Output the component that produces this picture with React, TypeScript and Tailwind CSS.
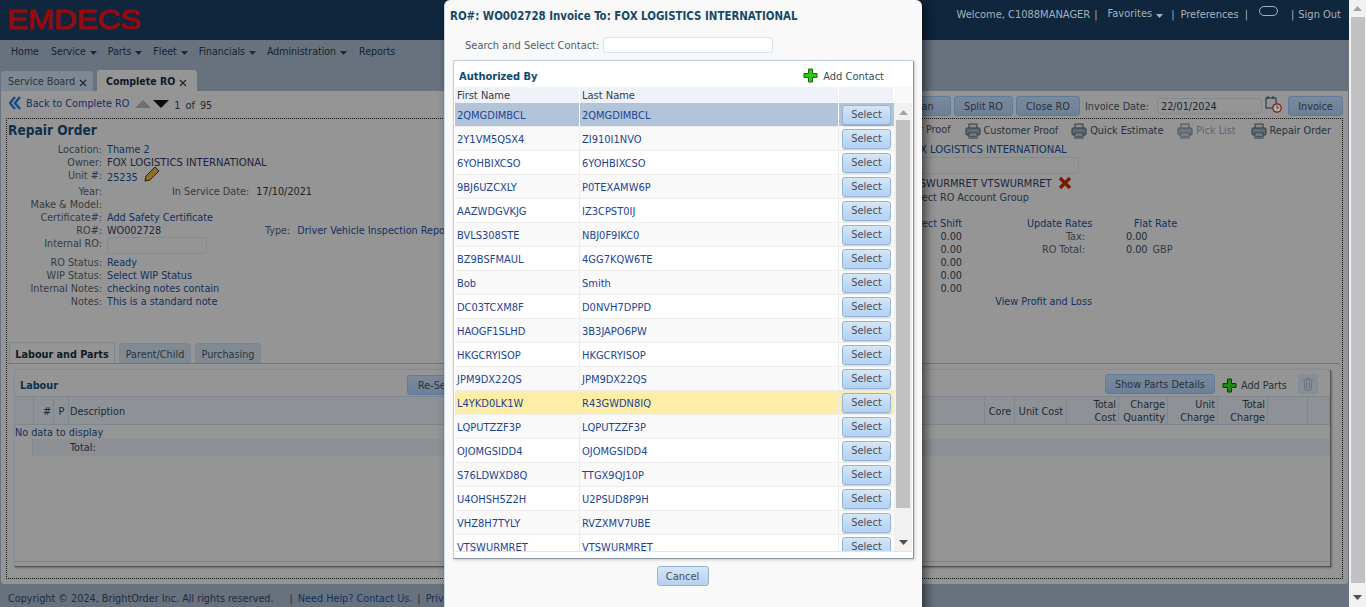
import React from "react";

const font = { fontFamily: '"DejaVu Sans", sans-serif' };

const contacts: [string, string][] = [
  ["2QMGDIMBCL", "2QMGDIMBCL"], ["2Y1VM5QSX4", "ZI910I1NVO"], ["6YOHBIXCSO", "6YOHBIXCSO"],
  ["9BJ6UZCXLY", "P0TEXAMW6P"], ["AAZWDGVKJG", "IZ3CPST0IJ"], ["BVLS308STE", "NBJ0F9IKC0"],
  ["BZ9BSFMAUL", "4GG7KQW6TE"], ["Bob", "Smith"], ["DC03TCXM8F", "D0NVH7DPPD"],
  ["HAOGF1SLHD", "3B3JAPO6PW"], ["HKGCRYISOP", "HKGCRYISOP"], ["JPM9DX22QS", "JPM9DX22QS"],
  ["L4YKD0LK1W", "R43GWDN8IQ"], ["LQPUTZZF3P", "LQPUTZZF3P"], ["OJOMGSIDD4", "OJOMGSIDD4"],
  ["S76LDWXD8Q", "TTGX9QJ10P"], ["U4OHSH5Z2H", "U2PSUD8P9H"], ["VHZ8H7TYLY", "RVZXMV7UBE"],
  ["VTSWURMRET", "VTSWURMRET"],
];

const Plus = ({ dark = false }: { dark?: boolean }) => (
  <svg width="15" height="15" viewBox="0 0 15 15" className="shrink-0">
    <path d="M5.5 1h4v4.5H14v4H9.5V14h-4V9.5H1v-4h4.5z" fill={dark ? "#1f8a12" : "#2fc812"} stroke={dark ? "#0c3d08" : "#116b08"} strokeWidth="1" />
  </svg>
);

const Printer = ({ dim = false }: { dim?: boolean }) => (
  <svg width="16" height="16" viewBox="0 0 16 16" className="shrink-0" opacity={dim ? 0.7 : 1}>
    <rect x="4" y="1" width="8" height="5" fill="#8c8c8c" stroke="#2f3a44" />
    <rect x="1" y="5" width="14" height="7" rx="1" fill="#5f6a75" stroke="#2f3a44" />
    <rect x="4" y="10" width="8" height="5" fill="#9a9a9a" stroke="#2f3a44" />
    <path d="M5 12h6M5 13.5h6" stroke="#4a5560" />
  </svg>
);

const Caret = ({ color = "#1e2a36" }: { color?: string }) => (
  <svg width="7" height="4" viewBox="0 0 7 4" className="ml-[4px] mt-[6px] shrink-0"><path d="M0 0h7L3.5 4z" fill={color} /></svg>
);

const Close = () => (
  <svg width="8" height="8" viewBox="0 0 8 8" className="mt-[4px] ml-[4px] shrink-0"><path d="M1 1l6 6M7 1L1 7" stroke="#222" strokeWidth="1.1" /></svg>
);

function BgButton({ children, className = "" }: { children: React.ReactNode; className?: string }) {
  return (
    <button className={"h-5 rounded-[3px] border border-[#5d7c9d] bg-gradient-to-b from-[#7b8a9a] to-[#6c8098] text-[#27323d] text-center leading-[17px] whitespace-nowrap " + className}>
      {children}
    </button>
  );
}

function Field({ label, children, h = "h-[13px]" }: { label: string; children?: React.ReactNode; h?: string }) {
  return (
    <div className={"flex " + h}>
      <div className="w-[93px] text-right text-[#333c46] shrink-0 whitespace-nowrap">{label}</div>
      <div className="ml-[5px] text-[#10315e] whitespace-nowrap flex items-start">{children}</div>
    </div>
  );
}

function ColHead({ w, children, right = false, two = false }: { w: string; children?: React.ReactNode; right?: boolean; two?: boolean }) {
  return (
    <div className={"flex items-center border-r border-[#7f868e] h-full pl-[3px] pr-[2px] text-[#1d2a36] leading-[13px] shrink-0 whitespace-nowrap " + w + (right ? " justify-end text-right" : " justify-center") + (two ? "" : " pt-[1px]")}>
      <span>{children}</span>
    </div>
  );
}

function Background() {
  return (
    <div className="flex h-full w-[1349px] flex-col shrink-0 bg-[#67727e] text-[10.75px]">
      <header className="flex h-10 shrink-0 bg-[#0f263d] justify-between pl-[8px] pr-[8px]">
        <svg width="136" height="24" viewBox="0 0 136 24" className="mt-[7px]">
          <text x="-1" y="22" textLength="134" lengthAdjust="spacingAndGlyphs" fontFamily="Liberation Sans, sans-serif" fontWeight="400" fontSize="28" stroke="#930b10" strokeWidth="1.1" fill="#930b10">EMDECS</text>
        </svg>
        <div className="flex items-start pt-[8px] text-[11px] text-[#a4b2bf] whitespace-nowrap">
          <span>Welcome, C1088MANAGER</span>
          <span className="ml-[4px]">|</span>
          <span className="ml-[10px] -mt-[1px]">Favorites</span><Caret color="#a4b2bf" />
          <span className="ml-[8px]">|</span>
          <span className="ml-[6px]">Preferences</span>
          <span className="ml-[6px]">|</span>
          <span className="ml-[11px] block h-[10px] w-[19px] rounded-[5px] border-[1.5px] border-[#a4b2bf] mt-[-2px]" />
          <span className="ml-[13px]">|</span>
          <span className="ml-[4px]">Sign Out</span>
        </div>
      </header>

      <div className="flex h-[30px] shrink-0 items-start pl-[11px] pt-[5px] text-[10.5px] text-[#15222f] whitespace-nowrap">
        <span>Home</span>
        <span className="ml-[12px]">Service</span><Caret />
        <span className="ml-[11px]">Parts</span><Caret />
        <span className="ml-[11px]">Fleet</span><Caret />
        <span className="ml-[11px]">Financials</span><Caret />
        <span className="ml-[11px]">Administration</span><Caret />
        <span className="ml-[12px]">Reports</span>
      </div>

      <div className="flex h-[21px] shrink-0 items-end pl-[1px]">
        <div className="flex h-[20px] w-[92px] items-start rounded-t-[3px] bg-[#7e8892] pl-[7px] pt-[4px] text-[#2b3540] whitespace-nowrap">
          Service Board<Close />
        </div>
        <div className="ml-[4px] flex h-[21px] w-[100px] items-start rounded-t-[3px] bg-[#959595] pl-[9px] pt-[5px] text-[10.5px] font-bold text-[#0f1b26] whitespace-nowrap">
          Complete RO<Close />
        </div>
      </div>

      <main className="mx-[1px] flex h-[493px] shrink-0 flex-col rounded-b-[3px] bg-[#959595] pl-[5px] pr-[5px]">
        <div className="flex h-[27px] shrink-0 items-start justify-between">
          <div className="flex items-start pt-[6px] pl-[3px] whitespace-nowrap">
            <svg width="12" height="14" viewBox="0 0 12 14" className="shrink-0 -mt-[1px]"><path d="M6 1L1 7l5 6M11 1L6 7l5 6" fill="none" stroke="#1a4a8a" strokeWidth="2.4" /></svg>
            <span className="ml-[5px] text-[#123063]">Back to Complete RO</span>
            <svg width="16" height="9" viewBox="0 0 16 9" className="ml-[6px] mt-[3px]"><path d="M8 0l8 8H0z" fill="#6f6f6f" /></svg>
            <svg width="16" height="9" viewBox="0 0 16 9" className="ml-[2px] mt-[3px]"><path d="M0 0h16L8 8z" fill="#0c0c0c" /></svg>
            <span className="ml-[5px] mt-[2px] text-[#1b2b3a] [word-spacing:2px]">1 of 95</span>
          </div>
          <div className="flex items-start pt-[5px] whitespace-nowrap">
            <BgButton className="w-[120px]">Assign Technician</BgButton>
            <BgButton className="ml-[3px] w-[59px]">Split RO</BgButton>
            <BgButton className="ml-[3px] w-[64px]">Close RO</BgButton>
            <span className="ml-[5px] mt-[4px] w-[66px] text-[#2a3440]">Invoice Date:</span>
            <div className="ml-[6px] mt-[2px] h-[16px] w-[105px] rounded-[3px] border border-[#818a93] bg-[#959595] pl-[3px] leading-[15px] text-[#1c2733]">22/01/2024</div>
            <svg width="17" height="17" viewBox="0 0 17 17" className="ml-[3px]">
              <rect x="1" y="2" width="10" height="10" fill="none" stroke="#1c2a3a" />
              <path d="M3 0v3M8 0v3" stroke="#1c2a3a" />
              <circle cx="12" cy="12" r="4.2" fill="#b0b0b0" stroke="#7c1c10" strokeWidth="1.2" />
              <path d="M12 9.5V12h2" stroke="#7c1c10" fill="none" />
            </svg>
            <BgButton className="ml-[6px] w-[55px]">Invoice</BgButton>
          </div>
        </div>

        <section className="flex h-[461px] shrink-0 flex-col border border-dotted border-[#111] pl-[1px] pr-[1px]">
          <div className="flex h-[223px] shrink-0">
            <div className="w-[800px] shrink-0">
              <h1 className="h-[24px] pt-[2px] text-[13.6px] font-bold leading-[18px] text-[#0e2f4b]">Repair Order</h1>
              <div className="flex flex-col pl-[1px]">
                <Field label="Location:">Thame 2</Field>
                <Field label="Owner:"><span className="text-[11.2px] text-[#1d2440]">FOX LOGISTICS INTERNATIONAL</span></Field>
                <Field label="Unit #:" h="h-[16px]">
                  <span className="mt-[2px]">25235</span>
                  <svg width="16" height="16" viewBox="0 0 16 16" className="ml-[6px] -mt-[3px]">
                    <path d="M1 15l1-5L11 1l4 4-9 9z" fill="#8f6f28" stroke="#2c2006" strokeWidth="1" />
                  </svg>
                </Field>
                <Field label="Year:">
                  <span className="ml-[65px] text-[#333c46]">In Service Date:</span>
                  <span className="ml-[7px] text-[#222]">17/10/2021</span>
                </Field>
                <Field label="Make &amp; Model:" />
                <Field label="Certificate#:">Add Safety Certificate</Field>
                <Field label="RO#:">
                  <span className="text-[#1d2440] w-[158px]">WO002728</span>
                  <span className="text-[#333c46]">Type:</span>
                  <span className="ml-[7px]">Driver Vehicle Inspection Report</span>
                </Field>
                <Field label="Internal RO:" h="h-[19px]">
                  <span className="block h-[17px] w-[100px] rounded-[3px] border border-[#848b92]" />
                </Field>
                <Field label="RO Status:">Ready</Field>
                <Field label="WIP Status:">Select WIP Status</Field>
                <Field label="Internal Notes:">checking notes contain</Field>
                <Field label="Notes:">This is a standard note</Field>
              </div>
            </div>
            <div className="flex-1 min-w-0">
              <div className="flex h-[24px] items-start justify-end pt-[4px] pr-[10px] whitespace-nowrap text-[#26313c]">
                <span>Work Order Proof</span>
                <span className="ml-[14px] flex"><Printer /><span className="ml-[3px] mt-[1px]">Customer Proof</span></span>
                <span className="ml-[13px] flex"><Printer /><span className="ml-[3px] mt-[1px]">Quick Estimate</span></span>
                <span className="ml-[14px] flex"><Printer dim /><span className="ml-[3px] mt-[1px] text-[#5c6670]">Pick List</span></span>
                <span className="ml-[15px] flex"><Printer /><span className="ml-[3px] mt-[1px]">Repair Order</span></span>
              </div>
              <div className="ml-[99px] flex flex-col items-start whitespace-nowrap">
                <div className="h-[13px] text-[11.2px] text-[#10315e]">FOX LOGISTICS INTERNATIONAL</div>
                <div className="mt-[1px] h-[17px] w-[172px] rounded-[3px] border border-[#848b92]" />
                <div className="mt-[2px] flex h-[17px] items-start text-[#1d2440]">
                  <span className="mt-[1px] text-[11px]">VTSWURMRET VTSWURMRET</span>
                  <svg width="14" height="14" viewBox="0 0 14 14" className="ml-[6px]"><path d="M2 2l10 10M12 2L2 12" stroke="#7c1a08" strokeWidth="3.4" /></svg>
                </div>
                <div className="h-[13px] text-[#26313c] -mt-[2px]">Select RO Account Group</div>
              </div>
              <div className="mt-[13px] flex whitespace-nowrap">
                <div className="w-[154px] shrink-0 text-right text-[#10315e]">
                  <div className="h-[13px]">Direct Shift</div>
                  {[0, 1, 2, 3, 4].map((i) => <div key={i} className="h-[13px] text-[#1d2a36]">0.00</div>)}
                </div>
                <div className="ml-[65px] w-[65px] shrink-0">
                  <div className="h-[13px] text-[#10315e]">Update Rates</div>
                  <div className="h-[13px] text-right text-[#333c46] pr-[7px]">Tax:</div>
                  <div className="h-[13px] text-right text-[#333c46] pr-[7px]">RO Total:</div>
                  <div className="h-[39px]" />
                  <div className="flex h-[13px] justify-end text-[#10315e]">View Profit and Loss</div>
                </div>
                <div className="ml-[34px]">
                  <div className="h-[13px] ml-[8px] text-[#10315e]">Flat Rate</div>
                  <div className="h-[13px] text-[#1d2a36]">0.00</div>
                  <div className="h-[13px] text-[#1d2a36]">0.00<span className="ml-[5px] text-[#333c46]">GBP</span></div>
                </div>
              </div>
            </div>
          </div>

          <div className="flex h-[21px] shrink-0 items-end pl-[1px]">
            <div className="flex h-[21px] w-[106px] items-center justify-center rounded-t-[3px] border border-b-0 border-[#7f868e] pt-[2px] font-bold text-[#0f1b26] whitespace-nowrap">Labour and Parts</div>
            <div className="ml-[4px] flex h-[20px] w-[72px] items-center justify-center rounded-t-[3px] border border-[#7f868e] bg-[#808a93] pt-[2px] text-[#2a3540]">Parent/Child</div>
            <div className="ml-[4px] flex h-[20px] w-[66px] items-center justify-center rounded-t-[3px] border border-[#7f868e] bg-[#808a93] pt-[2px] text-[#2a3540]">Purchasing</div>
          </div>
          <div className="mr-[1px] flex h-[214px] shrink-0 flex-col rounded-tr-[3px] border-t border-[#6f767d] pl-[6px] pr-[9px] pt-[5px]">
            <div className="flex h-[198px] flex-col rounded-t-[3px] border border-t-[#858c93] border-l-[#858c93] border-r-[#555] border-b-[#555] shadow-[1px_1px_2px_rgba(0,0,0,.3)]">
              <div className="flex h-[26px] shrink-0 items-start">
                <span className="ml-[5px] mt-[9px] w-[40px] font-bold text-[#0e2f4b]">Labour</span>
                <BgButton className="ml-[347px] mt-[5px] w-[120px] text-left pl-[10px]">Re-Sequence</BgButton>
                <div className="flex-1" />
                <BgButton className="mt-[4px] w-[110px]">Show Parts Details</BgButton>
                <span className="ml-[7px] mt-[8px] flex w-[65px] items-center text-[#26313c] whitespace-nowrap"><Plus dark /><span className="ml-[4px]">Add Parts</span></span>
                <div className="ml-[11px] mr-[12px] mt-[4px] flex h-5 w-5 shrink-0 items-center justify-center bg-[#868e97]">
                  <svg width="12" height="14" viewBox="0 0 12 14"><path d="M1 3h10M4 3V1h4v2M2 3l1 10h6l1-10M4.5 5v6M7.5 5v6" fill="none" stroke="#6b7480" /></svg>
                </div>
              </div>
              <div className="flex h-[29px] shrink-0 border-y border-[#7f868e] bg-[#8e9195]">
                <ColHead w="w-[19px]" />
                <ColHead w="w-[20px]" right>#</ColHead>
                <ColHead w="w-[15px]">P</ColHead>
                <div className="flex flex-1 items-center border-r border-[#7f868e] pl-[1px] pt-[1px] text-[#1d2a36]">Description</div>
                <ColHead w="w-[30px]">Core</ColHead>
                <ColHead w="w-[52px]">Unit Cost</ColHead>
                <ColHead w="w-[52px]" right two>Total<br />Cost</ColHead>
                <ColHead w="w-[49px]" right two>Charge<br />Quantity</ColHead>
                <ColHead w="w-[50px]" right two>Unit<br />Charge</ColHead>
                <ColHead w="w-[50px]" right two>Total<br />Charge</ColHead>
                <ColHead w="w-[40px]" />
                <ColHead w="w-[22px]" />
              </div>
              <div className="h-[13px] mt-[1px] text-[#10315e] leading-[13px] bg-[#959595]">No data to display</div>
              <div className="flex h-[17px] shrink-0 bg-[#8c8f93]">
                <div className="w-[18px] border-r border-[#7f868e] bg-[#959595]" />
                <span className="ml-[37px] mt-[2px] leading-[13px] text-[#1d2a36]">Total:</span>
              </div>
              <div className="flex-1" />
              <div className="h-[5px] border-t border-[#82868a]" />
            </div>
          </div>
        </section>
      </main>

      <footer className="flex flex-1 items-start whitespace-nowrap pl-[8px] pt-[8px] text-[#1f2c38]">
        <span>Copyright © 2024, BrightOrder Inc. All rights reserved.</span>
        <span className="ml-[16px]">|</span>
        <span className="ml-[5px] text-[#10315e]">Need Help? Contact Us.</span>
        <span className="ml-[5px]">|</span>
        <span className="ml-[5px] text-[#10315e]">Privacy Policy</span>
      </footer>
    </div>
  );
}

function Modal() {
  return (
    <div className="absolute left-[444px] top-0 h-[640px] w-[478px] rounded-t-[6px] border-l border-[#c8d6e6] bg-[#f9f9f9] shadow-[4px_2px_10px_rgba(0,0,0,.55)]">
      <div className="h-[37px] pl-[5px] pt-[9px] text-[11.4px] font-bold text-[#174a66] whitespace-nowrap leading-[14px]">RO#: WO002728 Invoice To: FOX LOGISTICS INTERNATIONAL</div>
      <div className="flex h-[23px] items-start pl-[20px]">
        <span className="mt-[2px] w-[130px] text-[#545c64] whitespace-nowrap">Search and Select Contact:</span>
        <input className="ml-[8px] h-[16px] w-[170px] rounded-[3px] border border-[#dbe3ec] bg-white" />
      </div>
      <div className="ml-[8px] flex h-[499px] w-[461px] flex-col rounded-t-[2px] border border-[#c3d0dc] border-b-[#8b959e] border-r-[#8b959e] bg-white shadow-[1px_1px_3px_rgba(0,0,0,.2)]">
        <div className="flex h-[26px] shrink-0 items-start justify-between pl-[5px] pr-[29px]">
          <span className="mt-[9px] font-bold leading-[13px] text-[#0d4a6e]">Authorized By</span>
          <span className="mt-[7px] flex items-start text-[#3a4a58] leading-[16px]"><Plus /><span className="ml-[5px] mt-[1px]">Add Contact</span></span>
        </div>
        <div className="mx-[1px] flex h-[16px] shrink-0 bg-[#eff3f9] text-[#333c46] leading-[17px]">
          <div className="w-[125px] border-r border-white pl-[2px]">First Name</div>
          <div className="w-[259px] border-r border-white pl-[2px]">Last Name</div>
          <div className="w-[55px] border-r border-white" />
          <div className="flex-1 bg-[#f9f9f9]" />
        </div>
        <div className="mx-[1px] flex h-[449px] shrink-0 overflow-hidden border-b border-[#dfe5eb]">
          <div className="w-[439px] shrink-0">
            {contacts.map(([a, b], i) => (
              <div
                key={a}
                className={
                  "flex h-[24px] border-b border-[#ececec] text-[#1d4494] leading-[23px] " +
                  (i === 0 ? "bg-[#b2c4da]" : i === 12 ? "bg-[#fdeda6]" : i % 2 === 1 ? "bg-[#f9f9f9]" : "bg-white")
                }
              >
                <div className={"w-[125px] border-r pl-[2px] pt-[1px] " + (i === 0 ? "border-white" : "border-[#ececec]")}>{a}</div>
                <div className={"w-[259px] border-r pl-[2px] pt-[1px] " + (i === 0 ? "border-white" : "border-[#ececec]")}>{b}</div>
                <div className="flex w-[55px] items-start justify-center pt-[2px]">
                  <button className="h-[20px] w-[49px] rounded-[3px] border border-[#92b5d8] bg-gradient-to-b from-[#d5e6f8] to-[#b4d1f0] pb-[1px] text-[#4a4f55] leading-[16px] shadow-[0_1px_1px_rgba(0,0,0,.15)]">Select</button>
                </div>
              </div>
            ))}
          </div>
          <div className="flex flex-1 flex-col items-center bg-[#f1f1f1] px-[2px]">
            <svg width="9" height="5" viewBox="0 0 9 5" className="mt-[7px]"><path d="M4.5 0L9 5H0z" fill="#a3a3a3" /></svg>
            <div className="mt-[5px] h-[388px] w-full bg-[#c1c1c1]" />
            <svg width="9" height="5" viewBox="0 0 9 5" className="mt-[32px]"><path d="M0 0h9L4.5 5z" fill="#505050" /></svg>
          </div>
        </div>
      </div>
      <div className="mt-[7px] flex justify-center pr-[2px]">
        <button className="h-[20px] w-[52px] rounded-[3px] border border-[#92b5d8] bg-gradient-to-b from-[#d5e6f8] to-[#b4d1f0] text-[#4a4f55] leading-[17px]">Cancel</button>
      </div>
    </div>
  );
}

export default function App() {
  return (
    <div style={font} className="relative flex h-[607px] w-[1366px] overflow-hidden text-[11px] leading-[13px] font-stretch-condensed">
      <Background />
      <Modal />
      <div className="flex w-[17px] shrink-0 flex-col items-center bg-[#f1f1f1]">
        <svg width="9" height="5" viewBox="0 0 9 5" className="mt-[6px]"><path d="M4.5 0L9 5H0z" fill="#a3a3a3" /></svg>
        <div className="mt-[6px] h-[566px] w-[14px] bg-[#c1c1c1]" />
        <svg width="9" height="5" viewBox="0 0 9 5" className="mt-[12px]"><path d="M0 0h9L4.5 5z" fill="#505050" /></svg>
      </div>
    </div>
  );
}
